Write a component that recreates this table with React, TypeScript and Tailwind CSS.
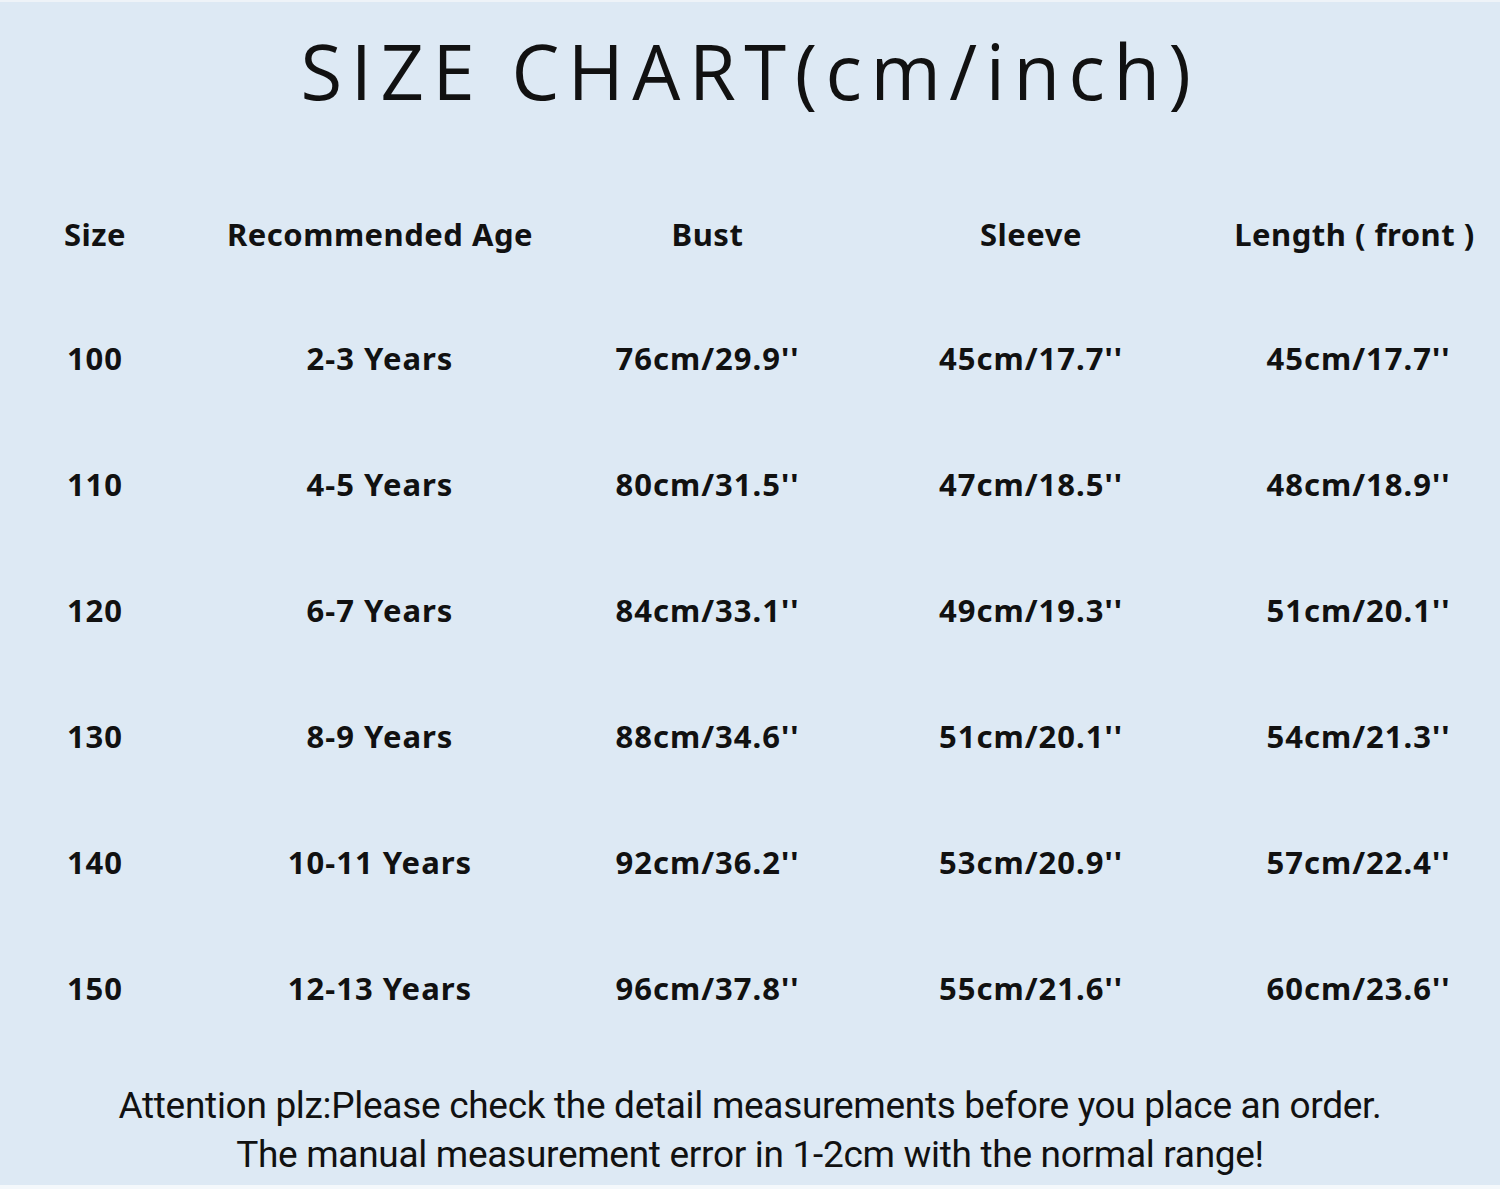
import React from "react";

const rows = [
  ["100", "2-3 Years", "76cm/29.9''", "45cm/17.7''", "45cm/17.7''"],
  ["110", "4-5 Years", "80cm/31.5''", "47cm/18.5''", "48cm/18.9''"],
  ["120", "6-7 Years", "84cm/33.1''", "49cm/19.3''", "51cm/20.1''"],
  ["130", "8-9 Years", "88cm/34.6''", "51cm/20.1''", "54cm/21.3''"],
  ["140", "10-11 Years", "92cm/36.2''", "53cm/20.9''", "57cm/22.4''"],
  ["150", "12-13 Years", "96cm/37.8''", "55cm/21.6''", "60cm/23.6''"],
];

const headers = ["Size", "Recommended Age", "Bust", "Sleeve", "Length ( front )"];

const grid = "grid grid-cols-[190px_380px_275px_372px_275px] items-center";

export default function App() {
  return (
    <div className="w-[1500px] h-[1189px] bg-[#dde9f4] border-t-2 border-b-4 border-t-[#eef3f8] border-b-[#f4f8fb] text-[#111] overflow-hidden">
      {/* title */}
      <div className="h-[171px] flex justify-center pt-[14px]">
        <h1 className="font-['Open_Sans',sans-serif] text-[76px] leading-[110px] tracking-[8.5px]">
          SIZE CHART(cm/inch)
        </h1>
      </div>

      {/* table */}
      <div className="font-['Noto_Sans',sans-serif] font-bold text-[31px] tracking-[1px]">
        <div className={`${grid} h-[122px]`}>
          {headers.map((h) => (
            <div key={h} className="text-center tracking-[0.5px]">
              {h}
            </div>
          ))}
        </div>
        {rows.map((r) => (
          <div key={r[0]} className={`${grid} h-[126px]`}>
            {r.map((c, i) => (
              <div key={i} className={i === 4 ? "text-center pl-[8px]" : "text-center"}>
                {c}
              </div>
            ))}
          </div>
        ))}
      </div>

      {/* note */}
      <div className="pt-[30px] text-center font-['Roboto',sans-serif] text-[37px] leading-[49px] tracking-[-0.3px]">
        <p>Attention plz:Please check the detail measurements before you place an order.</p>
        <p>The manual measurement error in 1-2cm with the normal range!</p>
      </div>
    </div>
  );
}
